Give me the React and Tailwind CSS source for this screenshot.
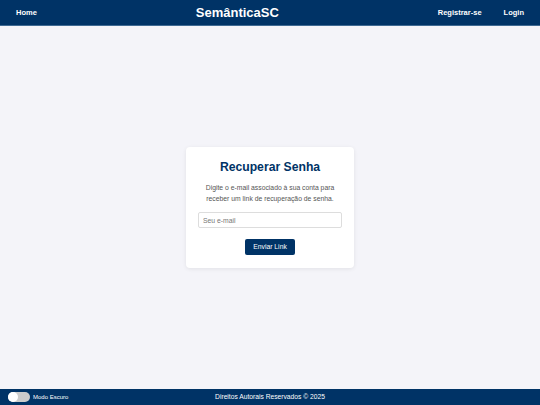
import { useState } from 'react';

const App = () => {
  const [email, setEmail] = useState('');
  const [dark, setDark] = useState(false);

  return (
    <div
      className="flex flex-col h-screen bg-[#f4f4f9]"
      style={{ fontFamily: '"Liberation Sans", Arial, sans-serif' }}
    >
      {/* Header */}
      <header className="flex items-center justify-between h-[26px] px-4 bg-[#003366] border-b border-[#3f6a93] text-white">
        <a href="#" className="text-[7.5px] font-bold">Home</a>
        <h1 className="text-[13px] font-bold leading-none">SemânticaSC</h1>
        <nav className="flex items-center gap-[22px]">
          <a href="#" className="text-[7.5px] font-bold">Registrar-se</a>
          <a href="#" className="text-[7.5px] font-bold">Login</a>
        </nav>
      </header>

      {/* Main */}
      <main className="flex-1 flex items-center justify-center">
        <div className="w-[168px] bg-white rounded-[4px] shadow-[0_1px_4px_rgba(0,0,0,0.08)] px-3 pt-[14px] pb-[12px] text-center">
          <h2 className="text-[12.2px] font-bold text-[#003366] leading-none">Recuperar Senha</h2>
          <p className="mt-[9px] text-[6.8px] leading-[11px] text-[#555]">
            Digite o e-mail associado à sua conta para receber um link de recuperação de senha.
          </p>
          <input
            type="email"
            value={email}
            onChange={(e) => setEmail(e.target.value)}
            placeholder="Seu e-mail"
            className="mt-[8px] w-full h-4 px-1 text-[6.8px] border border-[#ddd] rounded-[2px] outline-none placeholder:text-[#777]"
          />
          <button className="mt-[9px] w-[50px] h-4 rounded-[2px] bg-[#003366] text-white text-[6.8px]">
            Enviar Link
          </button>
        </div>
      </main>

      {/* Footer */}
      <footer className="grid grid-cols-[1fr_auto_1fr] items-center h-4 px-2 bg-[#003366] text-white">
        <div className="flex items-center gap-[3px]">
          <button
            onClick={() => setDark(!dark)}
            className="relative w-[22px] h-[10px] rounded-full bg-[#ccc]"
          >
            <span className={`absolute top-0 w-[10px] h-[10px] rounded-full bg-white ${dark ? 'left-[12px]' : 'left-0'}`} />
          </button>
          <span className="text-[6px]">Modo Escuro</span>
        </div>
        <p className="text-[6.7px]">Direitos Autorais Reservados © 2025</p>
        <div />
      </footer>
    </div>
  );
};

export default App;
